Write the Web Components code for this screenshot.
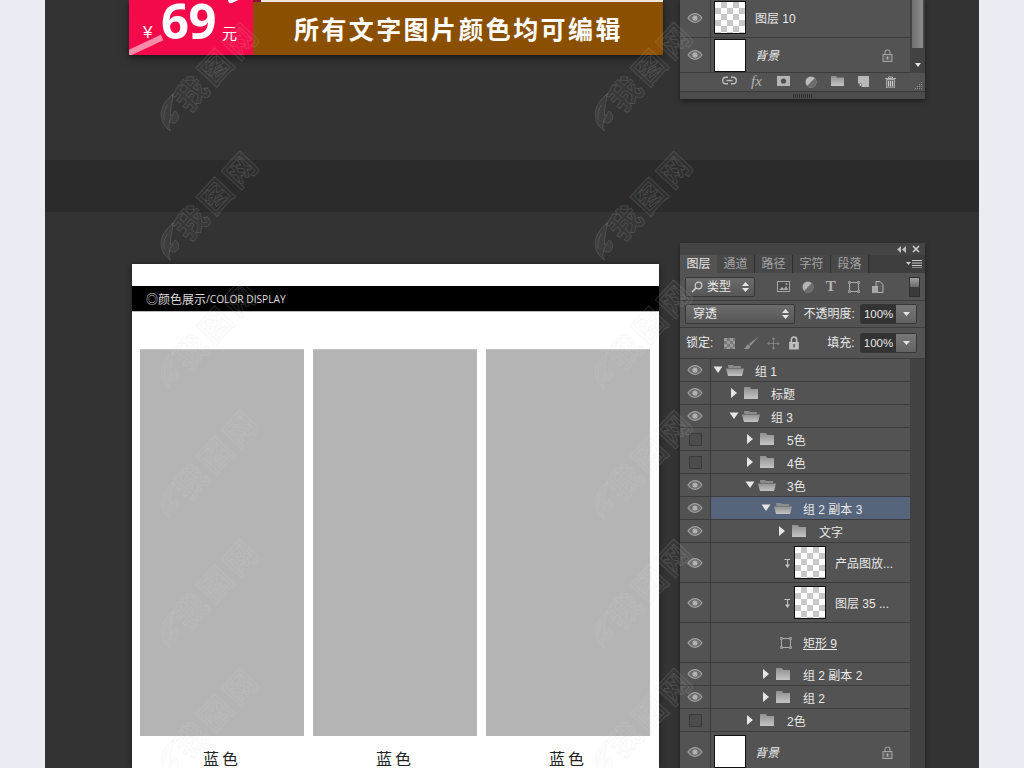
<!DOCTYPE html>
<html lang="zh">
<head>
<meta charset="utf-8">
<title>颜色展示</title>
<style>
  html, body { margin: 0; height: 768px; overflow: hidden; background: #e9ecf2; }
  body { font-family: "Liberation Sans", "Noto Sans CJK SC", sans-serif; }
</style>
</head>
<body>

<ps-page>
  <ps-section slot="first" kind="top">
    <ps-banner></ps-banner>
    <ps-panel compact scroll>
      <ps-layer kind="thumb" checker name="图层 10"></ps-layer>
      <ps-layer kind="thumb" italic lock name="背景" short></ps-layer>
    </ps-panel>
  </ps-section>
  <ps-section slot="second" kind="bottom">
    <ps-doc></ps-doc>
    <ps-panel>
      <ps-layer kind="group" open level="0" name="组 1"></ps-layer>
      <ps-layer kind="group" level="1" name="标题"></ps-layer>
      <ps-layer kind="group" open level="1" name="组 3"></ps-layer>
      <ps-layer kind="group" hidden-layer level="2" name="5色"></ps-layer>
      <ps-layer kind="group" hidden-layer level="2" name="4色"></ps-layer>
      <ps-layer kind="group" open level="2" name="3色"></ps-layer>
      <ps-layer kind="group" open selected level="3" name="组 2 副本 3"></ps-layer>
      <ps-layer kind="group" level="4" name="文字"></ps-layer>
      <ps-layer kind="clip" name="产品图放..."></ps-layer>
      <ps-layer kind="clip" name="图层 35 ..."></ps-layer>
      <ps-layer kind="shape" name="矩形 9"></ps-layer>
      <ps-layer kind="group" level="3" name="组 2 副本 2"></ps-layer>
      <ps-layer kind="group" level="3" name="组 2"></ps-layer>
      <ps-layer kind="group" hidden-layer level="2" name="2色"></ps-layer>
      <ps-layer kind="thumb" italic lock name="背景"></ps-layer>
    </ps-panel>
  </ps-section>
</ps-page>

<script>
const grad = id => `<defs><linearGradient id="${id}" x1="0" y1="0" x2="0" y2="1"><stop offset="0" stop-color="#8f8f8f"/><stop offset="1" stop-color="#c4c4c4"/></linearGradient></defs>`;

const ICONS = {
  eye: `<svg width="16" height="10" viewBox="0 0 16 10"><path d="M1 5C3.5 1.6 5.6.7 8 .7s4.500.9 7 4.300C12.500 8.400 10.400 9.300 8 9.300S3.500 8.400 1 5z" fill="#6a6a6a" stroke="#a2a2a2" stroke-width="1.200"/><circle cx="8" cy="5" r="2.600" fill="#b0b0b0"/></svg>`,
  closed: `<svg width="18" height="12" viewBox="0 0 18 12">${grad('fc')}<path d="M2 0h6l1 2h7v10H2z" fill="url(#fc)"/></svg>`,
  open: `<svg width="18" height="12" viewBox="0 0 18 12">${grad('fo')}<path d="M2 3V1h5l1 1h7v2H3z" fill="#8b8b8b"/><path d="M0 4.500h18L16 12H2z" fill="url(#fo)"/></svg>`,
  triRight: `<svg width="12" height="10" viewBox="0 0 12 10"><path d="M3 0l6 5-6 5z" fill="#e6e6e6"/></svg>`,
  triDown: `<svg width="12" height="10" viewBox="0 0 12 10"><path d="M1.500 1.500h9L6 8z" fill="#e6e6e6"/></svg>`,
  clip: `<svg width="7" height="10" viewBox="0 0 7 10"><path d="M.5 1.500H6M3.500 1.500V7" fill="none" stroke="#c4c4c4"/><path d="M1 6.500h5L3.500 10z" fill="#c4c4c4"/></svg>`,
  shape: `<svg width="12" height="12" viewBox="0 0 12 12"><rect x="1.500" y="1.500" width="9" height="9" fill="none" stroke="#aaa"/><path d="M0 0h3v3H0zM9 0h3v3H9zM0 9h3v3H0zM9 9h3v3H9z" fill="#8f8f8f"/></svg>`,
  lock: `<svg width="11" height="13" viewBox="0 0 11 13"><path d="M3 6V3.500a2.500 2.500 0 0 1 5 0V6" fill="none" stroke="#9c9c9c" stroke-width="1.200"/><rect x="1" y="5.500" width="9" height="7" fill="#626262" stroke="#a4a4a4"/><rect x="4.700" y="7.500" width="1.600" height="3" fill="#b0b0b0"/></svg>`,
  lockSolid: `<svg width="12" height="14" viewBox="0 0 11 13"><path d="M3 6V3.500a2.500 2.500 0 0 1 5 0V6" fill="none" stroke="#c0c0c0" stroke-width="1.400"/><rect x="1" y="5.500" width="9" height="7" fill="#c0c0c0"/><rect x="4.700" y="7.500" width="1.600" height="3" fill="#666"/></svg>`,
  link: `<svg width="15" height="9" viewBox="0 0 15 9"><path d="M6 1.200H4a3.300 3.300 0 0 0 0 6.600h2M9 1.200h2a3.300 3.300 0 0 1 0 6.600H9M4.500 4.500h6" fill="none" stroke="#bdbdbd" stroke-width="1.400"/></svg>`,
  mask: `<svg width="13" height="10" viewBox="0 0 13 10"><rect width="13" height="10" fill="#b4b4b4"/><circle cx="6.500" cy="5" r="2.600" fill="#505050"/></svg>`,
  adjust: `<svg width="12" height="12" viewBox="0 0 12 12"><circle cx="6" cy="6" r="5.500" fill="#bbb"/><path d="M9.900 2.100A5.500 5.500 0 0 1 2.100 9.900z" fill="#6c6c6c"/></svg>`,
  folder: `<svg width="13" height="10" viewBox="0 0 13 10">${grad('ft')}<path d="M0 0h5l1 1.500h7V10H0z" fill="url(#ft)"/></svg>`,
  newLayer: `<svg width="11" height="11" viewBox="0 0 11 11"><path d="M0 0h11v11H3.500V7.500H0z" fill="#b8b8b8"/><path d="M1 9l2-1.500V10z" fill="#ddd"/></svg>`,
  trash: `<svg width="11" height="12" viewBox="0 0 11 12"><path d="M0 2.500h11M3.500 2.500V1h4v1.500" fill="none" stroke="#b4b4b4"/><path d="M1.500 3.500h8V12h-8z" fill="#707070" stroke="#b4b4b4" stroke-width=".8"/><path d="M3.500 5v5.500M5.500 5v5.500M7.500 5v5.500" stroke="#c8c8c8"/></svg>`,
  search: `<svg width="12" height="12" viewBox="0 0 12 12"><circle cx="7.500" cy="4.500" r="3.300" fill="none" stroke="#d0d0d0" stroke-width="1.200"/><path d="M5 7L1 11" stroke="#d0d0d0" stroke-width="1.600"/></svg>`,
  stepper: `<svg width="7" height="10" viewBox="0 0 7 10"><path d="M3.500 0L7 4H0zM3.500 10L0 6h7z" fill="#e6e6e6"/></svg>`,
  caret: `<svg width="7" height="4" viewBox="0 0 7 4"><path d="M0 0h7L3.500 4z" fill="#e6e6e6"/></svg>`,
  image: `<svg width="13" height="11" viewBox="0 0 13 11"><rect x=".5" y=".5" width="12" height="10" fill="#4a4a4a" stroke="#a8a8a8"/><path d="M2 9l3-3 2 2 2-3 2.500 4z" fill="#a8a8a8"/><circle cx="9.500" cy="3" r="1" fill="#a8a8a8"/></svg>`,
  half: `<svg width="12" height="12" viewBox="0 0 12 12"><circle cx="6" cy="6" r="5.500" fill="#b4b4b4"/><path d="M9.900 2.100A5.500 5.500 0 0 1 2.100 9.900z" fill="#6c6c6c"/></svg>`,
  doc: `<svg width="12" height="12" viewBox="0 0 12 12"><path d="M4 .5h4l3 3v8H4z" fill="#5a5a5a" stroke="#b4b4b4"/><rect x="0" y="5" width="6" height="7" fill="#a8a8a8"/></svg>`,
  checker: `<svg width="11" height="11" viewBox="0 0 11 11"><rect width="11" height="11" fill="#7b7b7b"/><path d="M0 0h3v3H0zM6 0h3v3H6zM3 3h3v3H3zM9 3h2v3H9zM0 6h3v3H0zM6 6h3v3H6zM3 9h3v2H3zM9 9h2v2H9z" fill="#9a9a9a"/></svg>`,
  brush: `<svg width="16" height="14" viewBox="0 0 14 12"><path d="M13.500.5L5 6.800l1.700 1.700z" fill="#8f8f8f"/><path d="M4.500 7.300c-2 .3-1.500 3-4 3.700 3 1 5.500.2 6-2z" fill="#8f8f8f"/></svg>`,
  move: `<svg width="13" height="13" viewBox="0 0 13 13"><path d="M6.500 1v11M1 6.500h11" stroke="#808080"/><path d="M6.500 0l2 2.500h-4zM6.500 13l2-2.500h-4zM0 6.500l2.500-2v4zM13 6.500l-2.500-2v4z" fill="#808080"/></svg>`,
  collapse: `<svg width="9" height="7" viewBox="0 0 9 7"><path d="M4 0v7L0 3.500zM9 0v7L5 3.500z" fill="#bdbdbd"/></svg>`,
  close: `<svg width="8" height="8" viewBox="0 0 8 8"><path d="M1 1l6 6M7 1L1 7" stroke="#d0d0d0" stroke-width="1.600"/></svg>`,
  menu: `<svg width="16" height="8" viewBox="0 0 16 8"><path d="M0 2h5L2.500 5z" fill="#ccc"/><path d="M6 .5h10M6 3h10M6 5.500h10M6 8h10" stroke="#ccc"/></svg>`,
  grip: `<svg width="20" height="4" viewBox="0 0 20 4"><path d="M.5 0v4M2.500 0v4M4.500 0v4M6.500 0v4M8.500 0v4M10.500 0v4M12.500 0v4M14.500 0v4M16.500 0v4M18.500 0v4" stroke="#2e2e2e"/></svg>`,
  resize: `<svg width="10" height="10" viewBox="0 0 10 10"><path d="M8 1h1v1H8zM6 3h1v1H6zM8 3h1v1H8zM4 5h1v1H4zM6 5h1v1H6zM8 5h1v1H8zM2 7h1v1H2zM4 7h1v1H4zM6 7h1v1H6zM8 7h1v1H8z" fill="#8c8c8c"/></svg>`,
  // flame of the watermark, kept upright against the mark's rotation
  flame: `<svg width="22" height="40" viewBox="0 0 22 40"><path d="M14 1C5 8 1 16 2 24c.6 6 4 11 9 14-2-4-2-6 0-9 3 3 7 1 8-3 1-3-1-6-3-8-2 2-3 4-5 5 0-8 2-14 3-22zM8 12c-3 5-4 10-3 15M14 22c-2 3-4 5-4 8" fill="rgba(215,215,215,.06)" stroke="currentColor"/></svg>`
};

class PsPage extends HTMLElement {
  constructor() {
    super();
    this.attachShadow({ mode: 'open' });
  }

  connectedCallback() {
    const rows = [66, 195, 324, 454, 583, 712];
    const marks = [];
    rows.forEach(cy => {
      [214, 648].forEach(cx => marks.push(`<ps-watermark style="left:${cx - 75}px;top:${cy - 18}px"></ps-watermark>`));
    });
    this.shadowRoot.innerHTML = `
      <style>
        :host { display: block; width: 934px; height: 768px; margin: 0 45px; background: #333; position: relative; overflow: hidden; }
        .band { height: 52px; background: #2b2b2b; }
        .marks { position: absolute; left: -45px; top: 0; width: 1024px; height: 768px; z-index: 1; pointer-events: none; }
      </style>
      <slot name="first"></slot>
      <div class="band"></div>
      <slot name="second"></slot>
      <div class="marks">${marks.join('')}</div>
    `;
  }
}

class PsSection extends HTMLElement {
  constructor() {
    super();
    this.attachShadow({ mode: 'open' });
  }

  connectedCallback() {
    const top = this.getAttribute('kind') === 'top';
    this.shadowRoot.innerHTML = `
      <style>
        :host { display: block; overflow: hidden; height: ${top ? 160 : 556}px; }
        .row {
          display: flex; height: 100%; box-sizing: border-box;
          justify-content: space-between;
          align-items: ${top ? 'flex-end' : 'flex-start'};
          padding: ${top ? '0 54px 61px 84px' : '31px 54px 0 87px'};
        }
      </style>
      <div class="row"><slot></slot></div>
    `;
  }
}

class PsBanner extends HTMLElement {
  constructor() {
    super();
    this.attachShadow({ mode: 'open' });
  }

  connectedCallback() {
    this.shadowRoot.innerHTML = `
      <style>
        :host { display: block; width: 534px; height: 55px; margin-bottom: 44px; }
        .wrap { display: flex; height: 55px; box-shadow: 0 3px 8px rgba(0,0,0,.55); }
        .price {
          width: 124px; background: #f40a4a; color: #fff; display: flex; align-items: baseline;
          box-sizing: border-box; padding: 0 0 0 14px; position: relative; overflow: hidden; line-height: 55px;
          font-family: "Liberation Sans", "Noto Sans CJK SC", sans-serif;
        }
        .yen { font-size: 17px; width: 18px; position: relative; top: -3px; }
        .num { font: 700 49px/44px "Open Sans", "Liberation Sans", sans-serif; letter-spacing: -.5px; position: relative; top: -2px; }
        .unit { font-size: 15px; margin-left: 6px; position: relative; top: -2px; }
        .streak { position: absolute; left: -5px; top: 43px; width: 40px; height: 6px; background: #f98ba9; transform: rotate(-25deg); }
        .spark { position: absolute; left: 99px; top: -3px; width: 11px; height: 5px; background: #fff; border-radius: 3px; transform: rotate(-25deg); }
        .info { flex: 1; background: #8b4f00; position: relative; display: flex; align-items: center; padding-left: 41px; padding-top: 1px; box-sizing: border-box; }
        .info::before { content: ""; position: absolute; left: 8px; right: 0; top: 0; height: 2px; background: #f2e6d8; }
        .info::after { content: ""; position: absolute; left: 0; width: 8px; top: 0; height: 2px; background: #8c1030; }
        .title { font: 700 25px/1 "Noto Sans CJK SC", sans-serif; color: #fff; letter-spacing: 2.400px; white-space: nowrap; }
      </style>
      <div class="wrap">
        <div class="price">
          <span class="yen">¥</span><span class="num">69</span><span class="unit">元</span>
          <i class="streak"></i><i class="spark"></i>
        </div>
        <div class="info"><span class="title">所有文字图片颜色均可编辑</span></div>
      </div>
    `;
  }
}

class PsDoc extends HTMLElement {
  constructor() {
    super();
    this.attachShadow({ mode: 'open' });
  }

  connectedCallback() {
    const col = `<div class="col"><div class="swatch"></div><div class="cap">蓝色</div></div>`;
    this.shadowRoot.innerHTML = `
      <style>
        :host { display: block; width: 527px; height: 504px; background: #fff; margin-top: 21px; box-shadow: 0 0 6px rgba(0,0,0,.4); }
        .gap { height: 22px; }
        .head { height: 25px; background: #000; color: #ddd; border-bottom: 1px solid #bbb; display: flex; align-items: center; padding-left: 14px; font: 400 12px/25px "Noto Sans CJK SC", sans-serif; }
        .head span { font: 400 10.200px "Open Sans", "Noto Sans CJK SC", sans-serif; }
        .cols { display: flex; gap: 9px; padding: 37px 0 0 8px; }
        .col { width: 164px; }
        .swatch { height: 387px; background: #b4b4b4; border-top: 1px solid #c4c4c4; box-sizing: border-box; }
        .cap { text-align: center; font: 400 16px/16px "Noto Sans CJK SC", sans-serif; color: #222; letter-spacing: 3px; margin-top: 14px; }
      </style>
      <div class="gap"></div>
      <div class="head">◎颜色展示<span>/COLOR DISPLAY</span></div>
      <div class="cols">${col}${col}${col}</div>
    `;
  }
}

class PsPanel extends HTMLElement {
  constructor() {
    super();
    this.attachShadow({ mode: 'open' });
  }

  connectedCallback() {
    const compact = this.hasAttribute('compact');
    const tabs = ['图层', '通道', '路径', '字符', '段落'];
    const top = compact ? '' : `
      <div class="title">${ICONS.collapse}${ICONS.close}</div>
      <div class="tabs">
        ${tabs.map((t, i) => `<span class="tab${i === 0 ? ' on' : ''}">${t}</span>`).join('')}
        <span class="menu">${ICONS.menu}</span>
      </div>
      <div class="bar filter">
        <div class="select small">${ICONS.search}<b>类型</b>${ICONS.stepper}</div>
        <div class="tools">${ICONS.image}${ICONS.half}<span class="t">T</span>${ICONS.shape}${ICONS.doc}</div>
        <div class="toggle"><i></i></div>
      </div>
      <div class="bar blend">
        <div class="select wide"><b>穿透</b>${ICONS.stepper}</div>
        <label>不透明度:</label>
        <div class="num"><span>100%</span><i>${ICONS.caret}</i></div>
      </div>
      <div class="bar lockrow">
        <label class="lk">锁定:</label>
        <div class="locks">${ICONS.checker}${ICONS.brush}${ICONS.move}${ICONS.lockSolid}</div>
        <label class="fill">填充:</label>
        <div class="num"><span>100%</span><i>${ICONS.caret}</i></div>
      </div>`;
    const foot = compact ? `
      <div class="foot">
        <span style="left:42px">${ICONS.link}</span>
        <span class="fx" style="left:71px">fx</span>
        <span style="left:97px">${ICONS.mask}</span>
        <span style="left:125px">${ICONS.adjust}</span>
        <span style="left:151px">${ICONS.folder}</span>
        <span style="left:178px">${ICONS.newLayer}</span>
        <span style="left:205px">${ICONS.trash}</span>
        <span style="left:233px;top:8px">${ICONS.resize}</span>
      </div>
      <div class="grip">${ICONS.grip}</div>` : '';
    const thumb = this.hasAttribute('scroll') ? `<div class="thumb"></div><div class="down"></div>` : '';
    this.shadowRoot.innerHTML = `
      <style>
        :host { display: block; width: 245px; background: #535353; position: relative; color: #e8e8e8; font: 12px/1 "Liberation Sans", "Noto Sans CJK SC", sans-serif; box-shadow: 0 2px 5px rgba(0,0,0,.45); ${compact ? 'overflow: hidden;' : ''} }
        .title { height: 12px; background: #444; display: flex; justify-content: flex-end; align-items: center; gap: 6px; padding-right: 5px; }
        .tabs { height: 18px; background: #3e3e3e; display: flex; position: relative; align-items: center; }
        .tab { width: 37px; height: 18px; line-height: 19px; text-align: center; color: #a4a4a4; border-right: 1px solid #2f2f2f; background: #484848; }
        .tab.on { background: #535353; color: #e8e8e8; border-right: 0; width: 37px; }
        .menu { position: absolute; right: 3px; top: 5px; line-height: 0; }
        .bar { display: flex; align-items: center; box-sizing: border-box; border-bottom: 1px solid #3c3c3c; padding: 0 5px; }
        .filter { height: 28px; }
        .blend { height: 27px; }
        .lockrow { height: 31px; }
        .select { height: 20px; box-sizing: border-box; border: 1px solid #363636; border-radius: 2px; background: linear-gradient(#6c6c6c, #565656); display: flex; align-items: center; padding: 0 5px; }
        .select b { font-weight: 400; flex: 1; }
        .select.small { width: 70px; }
        .select.small b { margin-left: 4px; }
        .select.wide { width: 110px; }
        .select.wide b { margin-left: 2px; }
        .tools { display: flex; align-items: center; margin-left: 22px; width: 108px; justify-content: space-between; }
        .t { font: 700 15px "Liberation Serif", serif; color: #b4b4b4; }
        .toggle { margin-left: 25px; width: 9px; height: 18px; background: #3a3a3a; border: 1px solid #2e2e2e; }
        .toggle i { display: block; height: 9px; background: linear-gradient(#a0a0a0, #6a6a6a); }
        label { white-space: nowrap; }
        .blend label { margin-left: 9px; width: 57px; }
        .num { width: 57px; height: 20px; box-sizing: border-box; border: 1px solid #363636; border-radius: 2px; display: flex; background: #333; margin-left: auto; margin-right: 3px; }
        .num span { flex: 1; line-height: 18px; text-align: center; font-size: 11.500px; }
        .num i { width: 20px; background: linear-gradient(#787878, #626262); display: flex; align-items: center; justify-content: center; }
        .lk { margin-left: 1px; }
        .locks { display: flex; align-items: center; gap: 8px; margin-left: 11px; }
        .fill { margin-left: 27px; }
        .list { background: #424242; position: relative; padding-right: 15px; }
        .thumb { position: absolute; right: 2px; top: -200px; bottom: 25px; width: 11px; background: linear-gradient(90deg, #6f6f6f, #8c8c8c); }
        .down { position: absolute; right: 4px; bottom: 6px; border: 3.500px solid transparent; border-top: 4px solid #e6e6e6; border-bottom: 0; }
        .foot { height: 19px; box-sizing: border-box; position: relative; background: #535353; border-bottom: 1px solid #3a3a3a; }
        .foot span { position: absolute; top: 3px; line-height: 0; }
        .foot .fx { font: italic 15px/12px "Liberation Serif", serif; color: #b4b4b4; top: 2px; }
        .grip { height: 7px; background: #4c4c4c; display: flex; justify-content: center; align-items: center; line-height: 0; }
      </style>
      ${top}
      <div class="list">${thumb}<slot></slot></div>
      ${foot}
    `;
  }
}

class PsLayer extends HTMLElement {
  constructor() {
    super();
    this.attachShadow({ mode: 'open' });
  }

  connectedCallback() {
    const kind = this.getAttribute('kind');
    const name = this.getAttribute('name') || '';
    const level = Number(this.getAttribute('level') || 0);
    const selected = this.hasAttribute('selected');
    const off = this.hasAttribute('hidden-layer');
    const open = this.hasAttribute('open');
    const tall = kind === 'clip' || kind === 'shape' || kind === 'thumb';
    const height = this.hasAttribute('short') ? 34 : (tall ? 39 : 22);

    let body = '';
    if (kind === 'group') {
      body = `<span class="tri" style="margin-left:${1 + level * 16}px">${open ? ICONS.triDown : ICONS.triRight}</span>
        <span class="ico">${open ? ICONS.open : ICONS.closed}</span>
        <span class="name" style="margin-left:11px;top:2px">${name}</span>`;
    } else if (kind === 'clip') {
      body = `<span class="ico" style="margin-left:73px;width:10px">${ICONS.clip}</span>
        <span class="pic checker" style="margin-left:0"></span>
        <span class="name" style="margin-left:9px">${name}</span>`;
    } else if (kind === 'shape') {
      body = `<span class="ico" style="margin-left:69px;width:12px">${ICONS.shape}</span>
        <span class="name" style="margin-left:11px;text-decoration:underline">${name}</span>`;
    } else {
      body = `<span class="pic ${this.hasAttribute('checker') ? 'checker' : ''}" style="margin-left:3px"></span>
        <span class="name" style="margin-left:9px;${this.hasAttribute('italic') ? 'font-style:italic' : ''}">${name}</span>
        ${this.hasAttribute('lock') ? `<span class="lock">${ICONS.lock}</span>` : ''}`;
    }

    this.shadowRoot.innerHTML = `
      <style>
        :host { display: block; }
        .row { display: flex; height: ${height}px; border-bottom: 1px solid #3b3b3b; background: #535353; overflow: hidden; }
        .eye { width: 30px; flex: none; border-right: 1px solid #3b3b3b; display: flex; align-items: center; justify-content: center; }
        .box { width: 11px; height: 11px; border: 1px solid #3a3a3a; background: #4c4c4c; }
        .main { flex: 1; display: flex; align-items: center; position: relative; white-space: nowrap; ${selected ? 'background: #56657b;' : ''} }
        .tri { width: 12px; flex: none; margin-right: 2px; line-height: 0; }
        .ico { width: 18px; flex: none; line-height: 0; }
        .pic { width: 30px; height: 31px; flex: none; background: #fff; border: 1px solid #111; }
        .pic.checker { background: repeating-conic-gradient(#c8c8c8 0 25%, #fff 0 50%) 0 0 / 12px 12px; }
        .name { position: relative; top: 1px; }
        .lock { position: absolute; right: 17px; top: 50%; margin-top: -6px; line-height: 0; }
      </style>
      <div class="row">
        <div class="eye">${off ? '<div class="box"></div>' : ICONS.eye}</div>
        <div class="main">${body}</div>
      </div>
    `;
  }
}

class PsWatermark extends HTMLElement {
  constructor() {
    super();
    this.attachShadow({ mode: 'open' });
  }

  connectedCallback() {
    this.shadowRoot.innerHTML = `
      <style>
        :host {
          position: absolute; display: flex; align-items: center; width: 150px; height: 36px;
          transform: rotate(-47deg); transform-origin: center;
          color: rgba(215,215,215,.16);
        }
        svg { flex: none; margin-right: 1px; transform: rotate(47deg); }
        span {
          font: 700 32px/36px "Noto Sans CJK SC", sans-serif; color: rgba(215,215,215,.05); white-space: nowrap;
          letter-spacing: 4px;
          -webkit-text-stroke: 1px rgba(215,215,215,.16);
        }
      </style>
      ${ICONS.flame}<span>我图网</span>
    `;
  }
}

customElements.define('ps-page', PsPage);
customElements.define('ps-section', PsSection);
customElements.define('ps-banner', PsBanner);
customElements.define('ps-doc', PsDoc);
customElements.define('ps-panel', PsPanel);
customElements.define('ps-layer', PsLayer);
customElements.define('ps-watermark', PsWatermark);
</script>
</body>
</html>
